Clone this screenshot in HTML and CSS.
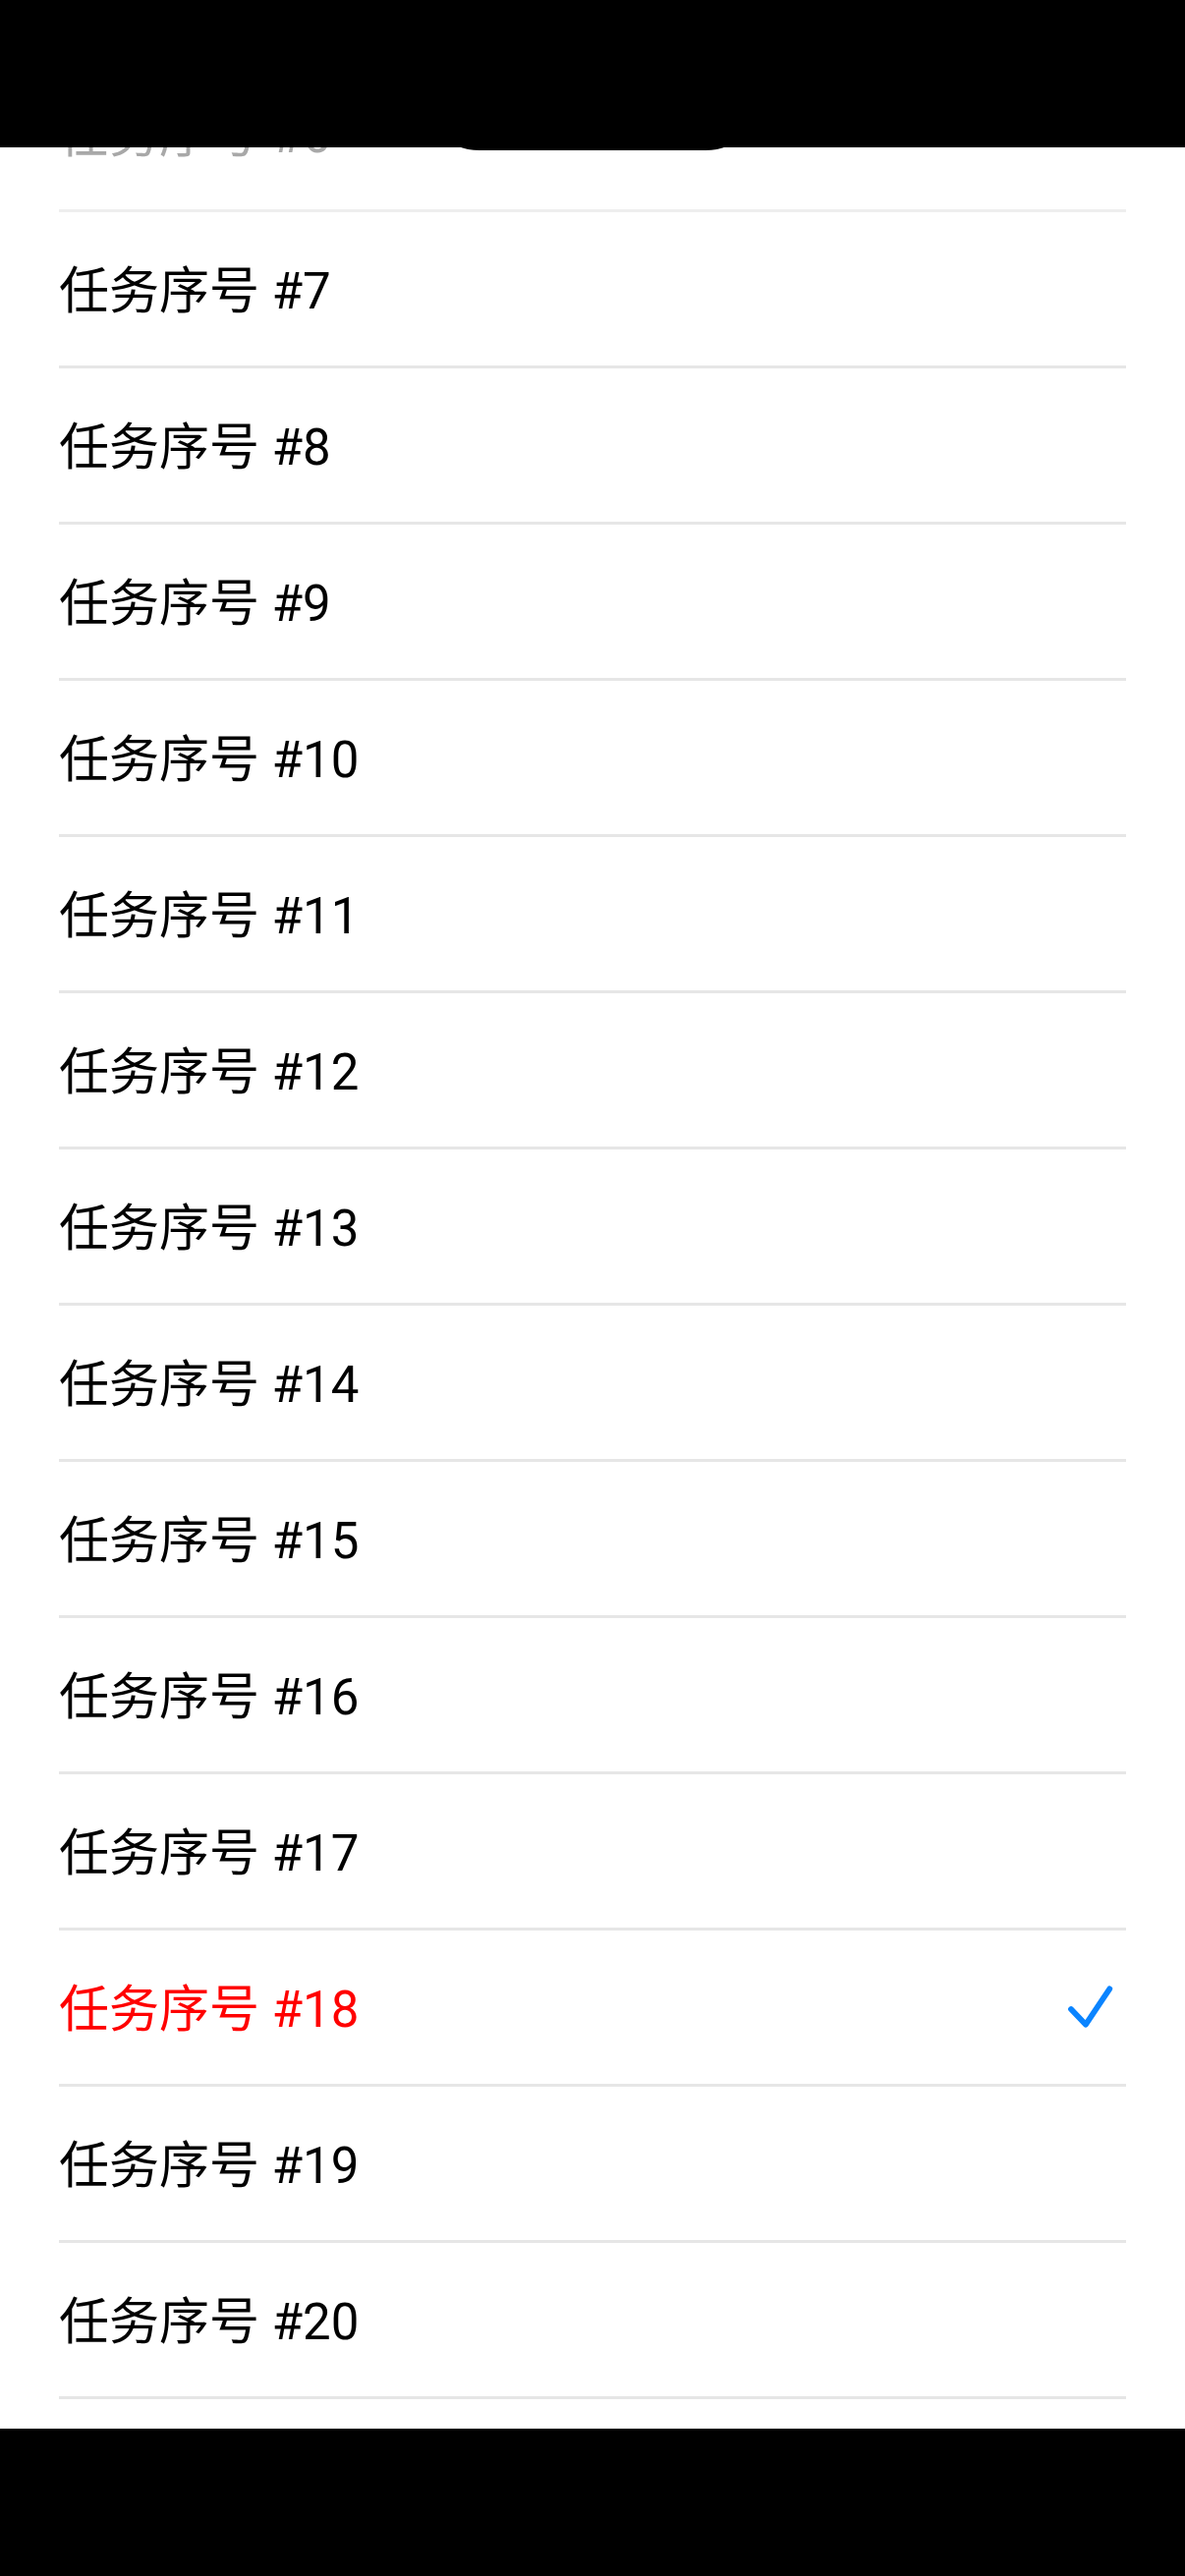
FILE: index.html
```html
<!DOCTYPE html>
<html lang="zh-CN">
<head>
    <meta charset="UTF-8">
    <meta name="viewport" content="width=device-width, initial-scale=1.0">
    <title>任务列表</title>
    <link rel="stylesheet" href="styles.css">
</head>
<body>
    <div class="top-bar">
        <div class="island"></div>
    </div>

    <ul class="task-list">
        <li class="task-row faded"><span>任务序号 #6</span></li>
        <li class="task-row"><span>任务序号 #7</span></li>
        <li class="task-row"><span>任务序号 #8</span></li>
        <li class="task-row"><span>任务序号 #9</span></li>
        <li class="task-row"><span>任务序号 #10</span></li>
        <li class="task-row"><span>任务序号 #11</span></li>
        <li class="task-row"><span>任务序号 #12</span></li>
        <li class="task-row"><span>任务序号 #13</span></li>
        <li class="task-row"><span>任务序号 #14</span></li>
        <li class="task-row"><span>任务序号 #15</span></li>
        <li class="task-row"><span>任务序号 #16</span></li>
        <li class="task-row"><span>任务序号 #17</span></li>
        <li class="task-row selected">
            <span>任务序号 #18</span>
            <svg class="check" width="60" height="60" viewBox="0 0 60 60">
                <polyline points="10,32 25,47.7 49.3,11.3" fill="none" stroke="#0A84FF" stroke-width="5.8" stroke-linecap="round" stroke-linejoin="round"/>
            </svg>
        </li>
        <li class="task-row"><span>任务序号 #19</span></li>
        <li class="task-row"><span>任务序号 #20</span></li>
        <li class="task-row"><span>任务序号 #21</span></li>
    </ul>

    <div class="bottom-bar"></div>
</body>
</html>
```

FILE: styles.css
```css
body {
    margin: 0;
    padding: 0;
    background-color: #fff;
    font-family: Roboto, "Noto Sans CJK SC", sans-serif;
    width: 1206px;
    height: 2622px;
    overflow: hidden;
    position: relative;
}
.top-bar {
    position: absolute;
    top: 0;
    left: 0;
    right: 0;
    height: 150px;
    background-color: #000;
    z-index: 2;
}
.island {
    position: absolute;
    top: 33px;
    left: 428px;
    width: 350px;
    height: 120px;
    border-radius: 60px;
    background-color: #000;
}
.bottom-bar {
    position: absolute;
    left: 0;
    right: 0;
    top: 2472px;
    bottom: 0;
    background-color: #000;
    z-index: 2;
}
.task-list {
    list-style: none;
    margin: 0;
    padding: 57px 0 0 0;
}
.task-row {
    display: flex;
    align-items: center;
    justify-content: space-between;
    height: 156px;
    margin: 0 60px;
    border-bottom: 3px solid #e6e6e6;
    font-size: 51px;
    line-height: 1;
    color: #000;
}
.task-row span {
    position: relative;
    top: 2px;
}
.task-row.faded {
    color: #a8a8a8;
    border-bottom-color: #eeeeee;
}
.task-row.selected {
    color: #ff0000;
}
.check {
    margin-right: 6px;
}
```
